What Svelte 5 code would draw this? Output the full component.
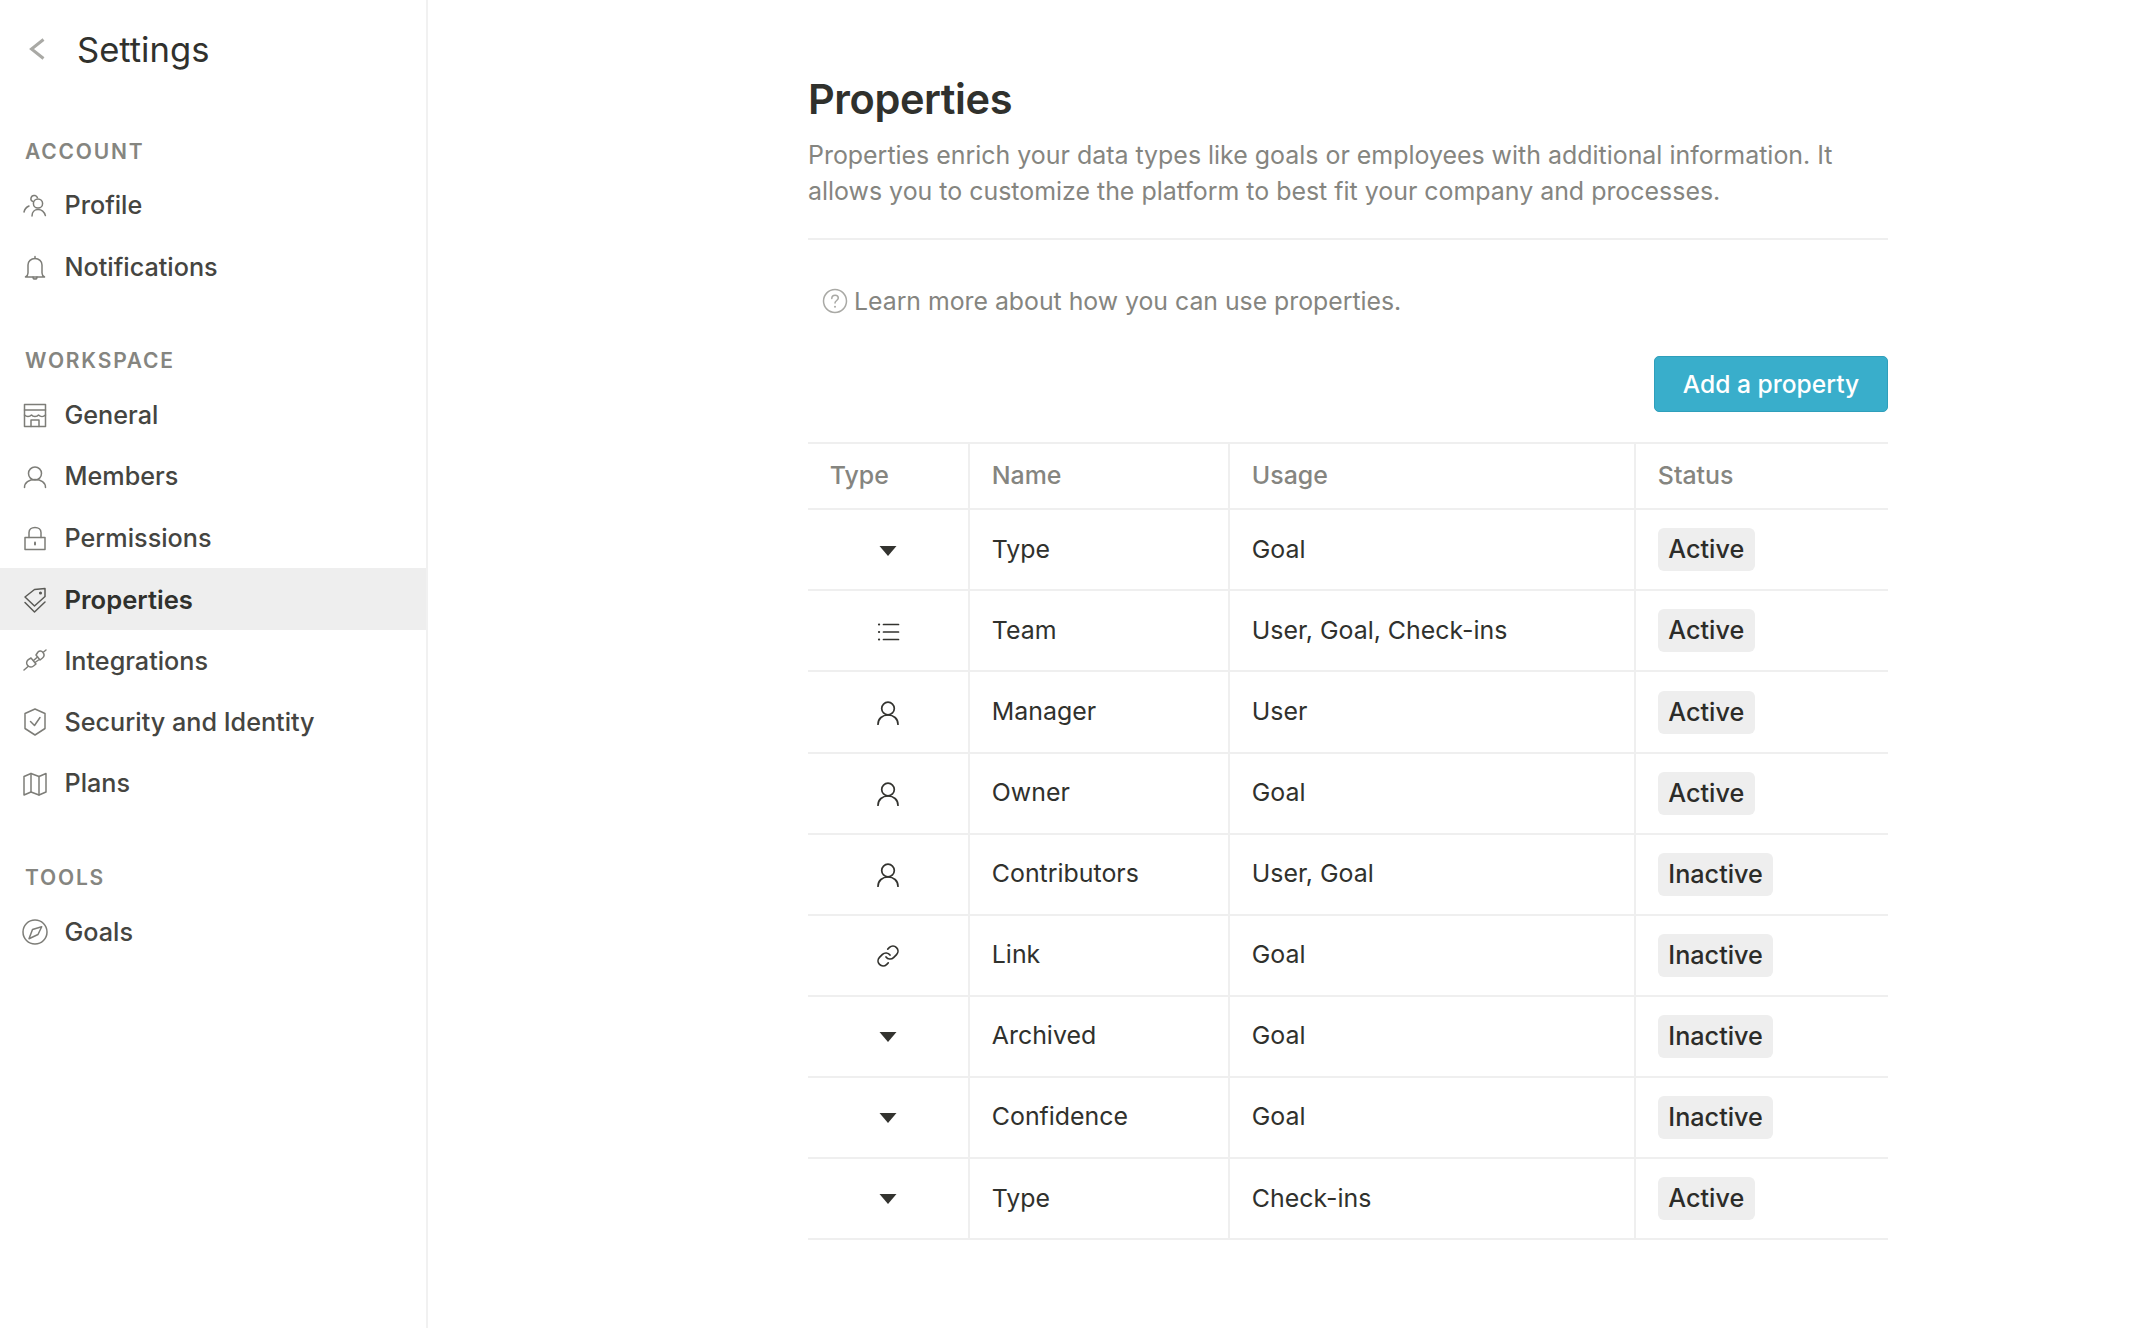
<script lang="ts">
  type Row = { icon: string; name: string; usage: string; status: string };

  const account = [
    { icon: 'profile', label: 'Profile' },
    { icon: 'bell', label: 'Notifications' }
  ];
  const workspace = [
    { icon: 'store', label: 'General' },
    { icon: 'person', label: 'Members' },
    { icon: 'lock', label: 'Permissions' },
    { icon: 'tag', label: 'Properties', active: true },
    { icon: 'plug', label: 'Integrations' },
    { icon: 'shield', label: 'Security and Identity' },
    { icon: 'map', label: 'Plans' }
  ];
  const tools = [{ icon: 'compass', label: 'Goals' }];
  const groups = [
    { title: 'ACCOUNT', items: account },
    { title: 'WORKSPACE', items: workspace },
    { title: 'TOOLS', items: tools }
  ];

  const rows: Row[] = [
    { icon: 'select', name: 'Type', usage: 'Goal', status: 'Active' },
    { icon: 'list', name: 'Team', usage: 'User, Goal, Check-ins', status: 'Active' },
    { icon: 'user', name: 'Manager', usage: 'User', status: 'Active' },
    { icon: 'user', name: 'Owner', usage: 'Goal', status: 'Active' },
    { icon: 'user', name: 'Contributors', usage: 'User, Goal', status: 'Inactive' },
    { icon: 'link', name: 'Link', usage: 'Goal', status: 'Inactive' },
    { icon: 'select', name: 'Archived', usage: 'Goal', status: 'Inactive' },
    { icon: 'select', name: 'Confidence', usage: 'Goal', status: 'Inactive' },
    { icon: 'select', name: 'Type', usage: 'Check-ins', status: 'Active' }
  ];
</script>

{#snippet navIcon(name: string)}
  <svg class="nav-icon" viewBox="0 0 24 24" fill="none" stroke="currentColor" stroke-width="1.5" stroke-linecap="round" stroke-linejoin="round">
    {#if name === 'profile'}
      <circle cx="15" cy="10.5" r="4.6" />
      <path d="M9 23c0-4 2.600-6.600 6-6.600s6.400 2.600 7.400 6.200" />
      <path d="M10 8.500C8.300 8 7.600 6.600 8 5c.5-1.800 2.300-2.800 4-2.400 1.200.3 2 1 2.400 2" />
      <path d="M1 19c.6-2.600 2.200-4.800 5-6" />
    {:else if name === 'bell'}
      <path d="M2.500 22c1.700-1 2.500-2.200 2.500-4v-8c0-3.800 3-6.500 7-6.500s7 2.700 7 6.500v8c0 1.800.8 3 2.500 4z" />
      <path d="M12 3.500V1.500M10 22c0 2.800 4 2.800 4 0" />
    {:else if name === 'store'}
      <path d="M1.500 1.500h21v22h-21z" />
      <path d="M1.500 7h21M1.500 12c2 2 5 2 7 0 1.500 2 5.500 2 7 0 2 2 5 2 7 0" />
      <path d="M8 23.500V17h8v6.500" />
    {:else if name === 'person'}
      <circle cx="12" cy="9.500" r="6.500" />
      <path d="M1.500 23.500c0-5 4.500-8 10.500-8s10.500 3 10.500 8" />
    {:else if name === 'lock'}
      <path d="M2 11.500h20v12H2z" />
      <path d="M6 11.500V6.500c0-3 2.500-5 6-5s6 2 6 5v5" />
      <path d="M12 16.500v2" stroke-width="2" />
    {:else if name === 'tag'}
      <path d="M11.500 2.500L22 1.500v8L11.500 19 2 10z" />
      <path d="M2 15.500l9.500 9.500L22 15" />
      <circle cx="17.500" cy="6" r=".8" />
    {:else if name === 'plug'}
      <path d="M8 9l5 6-2.500 2c-2 1.500-4.500 1-6-.8s-1-4 .8-5.500zM1 21l3.500-3" />
      <path d="M13 6l4 5 2.500-2c1.700-1.500 2-3.700.5-5.500S16.500 1.500 15 3zM20 3.500L23 1" />
      <path d="M10.500 11.500l4-3.500M12 13.500l3.500-2.500" />
    {:else if name === 'shield'}
      <path d="M12 -1l10 4.500v15L12 25 2 18.500v-15z" />
      <path d="M7.500 11.500l4 4 5.500-8" />
    {:else if name === 'map'}
      <path d="M1 5.500l7-3 8 3 7-3v18.500l-7 3-8-3-7 3z" />
      <path d="M8 2.500v18.500M16 5.500v18.500" />
    {:else if name === 'compass'}
      <circle cx="12" cy="12" r="12" />
      <path d="M18.700 6.700L15 14.500 6 18.700l3.500-9.200z" />
    {/if}
  </svg>
{/snippet}

{#snippet typeIcon(name: string)}
  {#if name === 'select'}
    <svg class="type-icon" viewBox="0 0 24 24"><path d="M3.500 7h17L12 17z" fill="#33332f" /></svg>
  {:else}
    <svg class="type-icon" viewBox="0 0 24 24" fill="none" stroke="#33332f" stroke-width="1.700" stroke-linecap="round" stroke-linejoin="round">
      {#if name === 'list'}
        <path d="M7.500 4.500h15M7.500 12h15M7.500 19.500h15" />
        <path d="M3 4.500h.1M3 12h.1M3 19.500h.1" stroke-width="2.200" />
      {:else if name === 'user'}
        <circle cx="12" cy="7.500" r="6.300" />
        <path d="M2 23.500c0-6 4.500-9.500 10-9.500s10 3.500 10 9.500" />
      {:else if name === 'link'}
        <path d="M10 13a5 5 0 0 0 7.540.54l3-3a5 5 0 0 0-7.070-7.070l-1.720 1.710" />
        <path d="M14 11a5 5 0 0 0-7.540-.54l-3 3a5 5 0 0 0 7.070 7.070l1.710-1.710" />
      {/if}
    </svg>
  {/if}
{/snippet}

<div class="layout">
  <aside class="sidebar">
    <header class="sidebar-head">
      <svg class="back" viewBox="0 0 16 24" fill="none" stroke="#a9a9a5" stroke-width="3"><path d="M14.500 2.500L2.500 12l12 9.500" /></svg>
      <h2>Settings</h2>
    </header>

    {#each groups as group}
      <section class="group">
        <h3>{group.title}</h3>
        {#each group.items as item}
          <a class="nav-item" class:active={item.active}>
            {@render navIcon(item.icon)}
            <span>{item.label}</span>
          </a>
        {/each}
      </section>
    {/each}
  </aside>

  <main class="content">
    <h1>Properties</h1>
    <p class="intro">
      Properties enrich your data types like goals or employees with additional information. It
      allows you to customize the platform to best fit your company and processes.
    </p>
    <hr />
    <p class="learn">
      <svg class="help" viewBox="0 0 26 26" fill="none" stroke="#a9a9a5" stroke-width="1.500">
        <circle cx="13" cy="13" r="11.500" />
        <path d="M9.800 10.500c0-2 1.400-3.300 3.300-3.300s3.200 1.200 3.200 2.900c0 2.300-3.300 2.500-3.300 5" stroke-linecap="round" />
        <circle cx="13" cy="18.800" r="1" fill="#a9a9a5" stroke="none" />
      </svg>
      Learn more about how you can use properties.
    </p>
    <div class="actions">
      <button>Add a property</button>
    </div>

    <table>
      <colgroup>
        <col class="c1" /><col class="c2" /><col class="c3" /><col class="c4" />
      </colgroup>
      <thead>
        <tr><th>Type</th><th>Name</th><th>Usage</th><th>Status</th></tr>
      </thead>
      <tbody>
        {#each rows as row}
          <tr>
            <td class="icon-cell">{@render typeIcon(row.icon)}</td>
            <td>{row.name}</td>
            <td>{row.usage}</td>
            <td class="status-cell"><span class="badge">{row.status}</span></td>
          </tr>
        {/each}
      </tbody>
    </table>
  </main>
</div>

<style>
  :global(body) {
    margin: 0;
    background: #fff;
    font-family: Inter, "Liberation Sans", sans-serif;
  }

  .layout {
    display: flex;
    height: 1328px;
    overflow: hidden;
  }

  .sidebar {
    width: 426px;
    flex: none;
    border-right: 2px solid #f1f1f1;
  }

  .sidebar-head {
    display: flex;
    align-items: center;
    height: 97.500px;
    padding-left: 29px;
  }

  .back {
    width: 16px;
    height: 24px;
    margin-right: 32px;
  }

  h2 {
    margin: 0;
    font-size: 34.600px;
    font-weight: 400;
    color: #30312d;
  }

  .group {
    margin-bottom: 10px;
  }

  .group h3 {
    margin: 0;
    padding: 41px 0 0 25px;
    height: 77px;
    box-sizing: border-box;
    font-size: 21px;
    font-weight: 600;
    letter-spacing: 1.800px;
    color: #858580;
  }

  .nav-item {
    display: flex;
    align-items: center;
    height: 61.400px;
    padding-left: 23px;
    font-size: 25.200px;
    font-weight: 500;
    color: #454541;
  }

  .nav-item.active {
    background: #eeeeee;
    color: #30312d;
    font-size: 25.600px;
    font-weight: 600;
  }

  .nav-icon {
    width: 24px;
    height: 24px;
    margin-right: 17.500px;
    color: #7d7d78;
    flex: none;
    overflow: visible;
  }

  .nav-item.active .nav-icon {
    color: #5a5a56;
  }

  .content {
    padding: 71px 0 0 380px;
    width: 1080px;
  }

  h1 {
    margin: 0;
    font-size: 41.500px;
    line-height: 56px;
    font-weight: 600;
    letter-spacing: -0.400px;
    color: #30312d;
  }

  .intro {
    margin: 9.600px 0 0;
    font-size: 24.930px;
    line-height: 36px;
    color: #858580;
  }

  hr {
    margin: 29px 0 0;
    border: 0;
    border-top: 2px solid #efefef;
  }

  .learn {
    display: flex;
    align-items: center;
    gap: 6px;
    margin: 43px 0 0 14px;
    font-size: 24.800px;
    line-height: 36px;
    color: #858580;
  }

  .help {
    width: 26px;
    height: 26px;
  }

  .actions {
    display: flex;
    justify-content: flex-end;
    margin-top: 37.700px;
  }

  button {
    width: 234px;
    height: 56px;
    border: 1px solid #2f9fbb;
    border-radius: 5px;
    background: #39aecb;
    color: #fff;
    font: 500 24.600px Inter, sans-serif;
  }

  table {
    width: 1080px;
    margin-top: 30px;
    border-collapse: collapse;
    table-layout: fixed;
    font-size: 24.900px;
    color: #30312d;
  }

  .c1 { width: 161px; }
  .c2 { width: 260px; }
  .c3 { width: 406px; }
  .c4 { width: 253px; }

  tr {
    height: 81.100px;
    border-bottom: 2px solid #efefef;
  }

  thead tr {
    height: 66px;
    border-top: 2px solid #efefef;
  }

  th {
    padding: 0 0 2px 21.800px;
    text-align: left;
    font-weight: 500;
    color: #858580;
  }

  td {
    padding: 0 0 2px 21.800px;
  }

  th + th,
  td + td {
    border-left: 2px solid #efefef;
  }

  .icon-cell {
    padding: 0 0 3px;
    text-align: center;
  }

  .status-cell {
    padding-bottom: 0;
  }

  .type-icon {
    display: inline-block;
    width: 24px;
    height: 24px;
    vertical-align: middle;
  }

  .badge {
    display: inline-block;
    padding: 0 10.500px;
    font-size: 25.200px;
    line-height: 43px;
    border-radius: 6px;
    background: #eeeeee;
    font-weight: 500;
    color: #2c2c29;
  }
</style>
